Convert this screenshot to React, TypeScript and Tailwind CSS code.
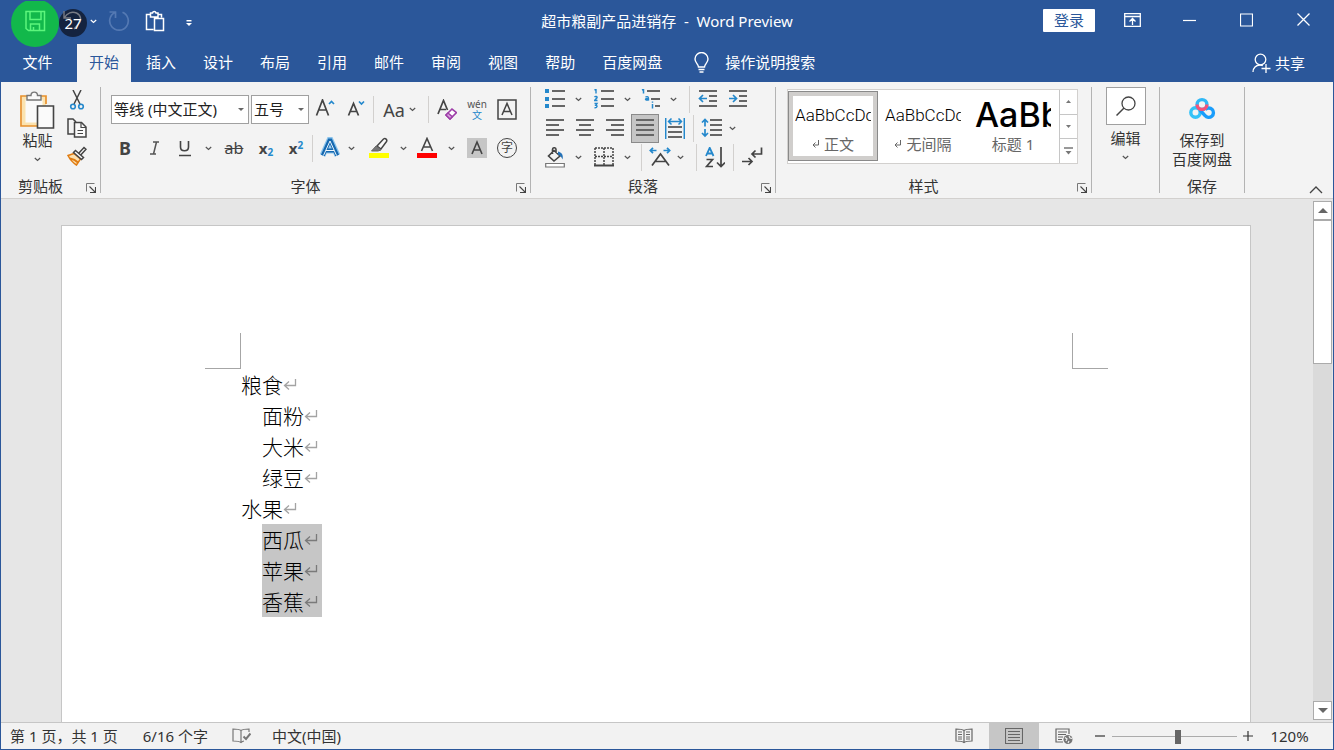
import type { ReactNode } from 'react';

const TABS = ['插入', '设计', '布局', '引用', '邮件', '审阅', '视图', '帮助', '百度网盘'];

const LINES = [
  { text: '粮食', indent: false, selected: false },
  { text: '面粉', indent: true, selected: false },
  { text: '大米', indent: true, selected: false },
  { text: '绿豆', indent: true, selected: false },
  { text: '水果', indent: false, selected: false },
  { text: '西瓜', indent: true, selected: true },
  { text: '苹果', indent: true, selected: true },
  { text: '香蕉', indent: true, selected: true },
];

type IconProps = { w?: number; h?: number; className?: string; children: ReactNode };

function Icon({ w = 20, h = 20, className = '', children }: IconProps) {
  return (
    <svg width={w} height={h} viewBox={`0 0 ${w} ${h}`} fill="none" stroke="#444" strokeWidth="1.5" className={`shrink-0 ${className}`} aria-hidden="true">
      {children}
    </svg>
  );
}

function Tool({ label, className = 'w-7', children }: { label: string; className?: string; children: ReactNode }) {
  return (
    <button type="button" aria-label={label} className={`h-full shrink-0 flex items-center justify-center ${className}`}>
      {children}
    </button>
  );
}

function Chevron({ color = '#555' }: { color?: string }) {
  return (
    <Icon w={7} h={5}>
      <path d="M.8 1l2.700 2.500L6.200 1" stroke={color} strokeWidth="1.200" />
    </Icon>
  );
}

function Drop({ label, className = 'w-3' }: { label: string; className?: string }) {
  return (
    <Tool label={label} className={className}>
      <Chevron />
    </Tool>
  );
}

function Sep({ className = '' }: { className?: string }) {
  return <div className={`w-px shrink-0 self-center h-[27px] bg-[#d2d0ce] ${className}`} />;
}

function Group({ label, launcher, className, children }: { label?: string; launcher?: boolean; className: string; children: ReactNode }) {
  return (
    <section aria-label={label} className={`shrink-0 my-[5px] flex flex-col justify-between border-r border-[#b3b3b3] ${className}`}>
      {children}
      {label && (
        <div className="relative h-[14px] text-center leading-[14px]">
          <span className={launcher ? 'pr-5' : ''}>{label}</span>
          {launcher && (
            <button type="button" aria-label={`${label}设置`} className="absolute right-1 bottom-0">
              <Icon w={10} h={10}>
                <path d="M.5 8.500V.5h8" stroke="#777" strokeWidth="1" />
                <path d="M3.500 3.500l5.500 5.500M9.500 4v5.500H4" strokeWidth="1.100" />
              </Icon>
            </button>
          )}
        </div>
      )}
    </section>
  );
}

function Combo({ label, value, className }: { label: string; value: string; className: string }) {
  return (
    <div className={`relative h-[29px] shrink-0 ${className}`}>
      <select aria-label={label} defaultValue={value} className="appearance-none w-full h-full bg-white border border-[#a0a0a0] pl-0.5 text-[#222]">
        <option>{value}</option>
      </select>
      <svg width="6" height="3" viewBox="0 0 6 3" className="absolute right-[5px] top-[13px] pointer-events-none" aria-hidden="true">
        <path d="M0 0h6L3 3z" fill="#666" />
      </svg>
    </div>
  );
}

function AlignIcon({ rows }: { rows: [number, number][] }) {
  return (
    <Icon h={21}>
      {rows.map(([a, b], i) => (
        <path key={i} d={`M${a} ${2 + i * 5}H${b}`} stroke="#666" strokeWidth="2" />
      ))}
    </Icon>
  );
}

function ReturnMark({ dark }: { dark: boolean }) {
  return (
    <Icon w={14} h={13}>
      <path d="M12.500 1v6.500H1.500M6 3.500L1.500 7.500 6 11.500" stroke={dark ? '#7a7a7a' : '#a3a3a3'} strokeWidth="1.300" />
    </Icon>
  );
}

function TitleBar() {
  return (
    <header className="h-[43px] pb-[3px] grid grid-cols-[1fr_auto_1fr] items-stretch text-white">
      <div className="flex pl-2.5">
        <button type="button" aria-label="保存" className="relative w-12 flex items-center justify-center">
          <span className="absolute -top-0.5 left-0 w-12 h-12 rounded-full bg-[#12b84b]" />
          <Icon w={22} h={22} className="relative">
            <path d="M2 1.500h18.500v19h-16L2 18.500zM6 1.500v8h11v-8M6.500 20.500v-6.500h9v6.500M9.500 20v-3" stroke="#5cf57c" strokeWidth="1.500" />
          </Icon>
        </button>
        <button type="button" aria-label="撤消" className="relative w-7 flex items-center justify-center">
          <span className="absolute top-2 left-0 w-7 h-7 rounded-full bg-[#14233f]" />
          <Icon w={22} h={22} className="relative">
            <path d="M2 1v7h7M2.500 7.500C5 3 10 1 14.500 3s5.500 7.500 2 11L12 19" stroke="#777b85" strokeWidth="1.400" />
          </Icon>
          <span className="absolute inset-x-0 top-3 text-center leading-5">27</span>
        </button>
        <Tool label="撤消列表" className="w-3">
          <Chevron color="#fff" />
        </Tool>
        <Tool label="重复" className="w-10">
          <Icon w={22} h={22}>
            <path d="M1.500 2h6v6M7 2.500A9.300 9.300 0 1 0 14.500 2.300" stroke="#5479b3" strokeWidth="1.700" />
          </Icon>
        </Tool>
        <Tool label="粘贴" className="w-8">
          <Icon w={20} h={22}>
            <path d="M8.500 19.500h-7v-15h4M13 4.500h3.500v3M5.500 3h2a1.800 1.800 0 0 1 3.500 0h2v4h-7.500zM9.500 8.500h9v12h-9z" stroke="#fff" strokeWidth="1.500" />
          </Icon>
        </Tool>
        <Tool label="自定义快速访问工具栏" className="w-9">
          <Icon w={6} h={7} className="mt-1">
            <path d="M.5 .7h5" stroke="#fff" />
            <path d="M0 3h6L3 6z" fill="#fff" stroke="none" />
          </Icon>
        </Tool>
      </div>
      <h1 className="self-center whitespace-pre">超市粮副产品进销存  -  Word Preview</h1>
      <div className="flex items-center justify-end pr-px pb-0.5">
        <button type="button" className="mr-[9px] h-[23px] w-[52px] bg-white rounded-[1px] leading-[23px] text-[#2b579a]">登录</button>
        <Tool label="功能区显示选项" className="w-[57px]">
          <Icon w={17} h={14}>
            <path d="M.7.7h15.600v12.600H.7zM.7 3.500h15.600M8.500 12V6M5.500 8.500l3-3 3 3" stroke="#fff" strokeWidth="1.300" />
          </Icon>
        </Tool>
        <Tool label="最小化" className="w-[57px]">
          <Icon w={13} h={14}><path d="M0 7.500h13" stroke="#fff" strokeWidth="1.200" /></Icon>
        </Tool>
        <Tool label="最大化" className="w-[57px]">
          <Icon w={13} h={14}><path d="M.5 1h12v12H.5z" stroke="#fff" strokeWidth="1.200" /></Icon>
        </Tool>
        <Tool label="关闭" className="w-[57px]">
          <Icon w={13} h={14}><path d="M.5.5l12 12M12.500.5l-12 12" stroke="#fff" strokeWidth="1.300" /></Icon>
        </Tool>
      </div>
    </header>
  );
}

function TabBar() {
  return (
    <nav className="h-[38px] flex items-stretch gap-[3px] text-white">
      <button type="button" className="w-[73px] pb-0.5">文件</button>
      <button type="button" className="px-3 pb-0.5 bg-[#f3f3f3] text-[#2b579a]">开始</button>
      {TABS.map((tab) => (
        <button key={tab} type="button" className="px-3 pb-0.5">{tab}</button>
      ))}
      <button type="button" className="ml-4 pb-0.5 flex items-center gap-[15px]">
        <Icon w={17} h={21}>
          <path d="M5.500 15c0-3-3.500-4-3.500-8a6.500 6.500 0 0 1 13 0c0 4-3.500 5-3.500 8zM5.500 17.500h6M6.500 20h4" stroke="#fff" strokeWidth="1.400" />
        </Icon>
        操作说明搜索
      </button>
      <button type="button" className="ml-auto mr-7 flex items-center gap-1">
        <Icon w={19} h={20}>
          <circle cx="8.500" cy="6.500" r="5.300" stroke="#fff" strokeWidth="1.300" />
          <path d="M1 19c0-4 3-7 7-7 1 0 2 .2 2.800.6M14 11v9M9.500 15.500h9" stroke="#fff" strokeWidth="1.300" />
        </Icon>
        共享
      </button>
    </nav>
  );
}

function ClipboardGroup() {
  return (
    <Group label="剪贴板" launcher className="w-[100px]">
      <div className="flex gap-1.5 pl-[15px]">
        <button type="button" className="w-[43px] flex flex-col items-center pt-1">
          <Icon w={35} h={38}>
            <path d="M2 5h24v30H2z" fill="#fbe3b0" stroke="none" />
            <path d="M5.500 8.500h17v23h-17z" fill="#fafafa" stroke="none" />
            <path d="M7 5H1v30h16M21 5h5v8" stroke="#e8912d" strokeWidth="1.700" />
            <path d="M7 9V4.500h4c0-4.500 6.500-4.500 6.500 0H21V9z" fill="#fafafa" stroke="#777" strokeWidth="1.400" />
            <path d="M17.500 15h16v22h-16z" fill="#fafafa" strokeWidth="1.600" />
          </Icon>
          <span className="h-[22px] leading-[22px]">粘贴</span>
          <span className="h-4 flex items-center"><Chevron /></span>
        </button>
        <div className="flex flex-col">
          <div className="h-[26px]"><Tool label="剪切" className="w-6">
            <Icon w={16} h={20}>
              <path d="M4 0l7 14M12 0L5 14" />
              <circle cx="4" cy="16.500" r="2.300" stroke="#2488cc" strokeWidth="1.600" />
              <circle cx="12" cy="16.500" r="2.300" stroke="#2488cc" strokeWidth="1.600" />
            </Icon>
          </Tool></div>
          <div className="h-[29px]"><Tool label="复制" className="w-6">
            <Icon w={20} h={20}>
              <path d="M7 16H1V1h5l3 3" />
              <path d="M7.500 4.500h7l4.500 4.500v10H7.500z" fill="#fafafa" />
              <path d="M14 5v4.500h5M10.500 12.500h5.500M10.500 15.500h5.500" strokeWidth="1.200" />
            </Icon>
          </Tool></div>
          <div className="h-[28px]"><Tool label="格式刷" className="w-6">
            <Icon w={20} h={20}>
              <path d="M7 7.500L1 9.500c2 4 4.500 7 8.500 9.500l4-6z" fill="#fbe0b0" stroke="#e07b10" />
              <path d="M3 12.500c3 .5 6 2 8 4" stroke="#e07b10" strokeWidth="2" />
              <path d="M11.500 7.500l5.500-6 2 1.800-5.500 6" fill="#fafafa" />
              <path d="M8.500 4.500l8 7-2 2-8-7z" fill="#fafafa" />
            </Icon>
          </Tool></div>
        </div>
      </div>
    </Group>
  );
}

function FontGroup() {
  return (
    <Group label="字体" launcher className="w-[430px]">
      <div className="pt-2 flex flex-col gap-2.5">
        <div className="flex h-[29px] pl-2.5">
          <Combo label="字体" value="等线 (中文正文)" className="w-[138px]" />
          <Combo label="字号" value="五号" className="ml-0.5 w-[58px]" />
          <Tool label="增大字号" className="w-8">
            <Icon h={21}><path d="M1.500 16.500L7.500 1l6 15.500M3.500 11h8" strokeWidth="1.700" /><path d="M14 5l2.500-2.500L19 5" stroke="#2488cc" strokeWidth="1.700" /></Icon>
          </Tool>
          <Tool label="减小字号" className="w-8">
            <Icon h={21}><path d="M1.500 16.500L6.500 4.500l5 12M3 12.500h7" strokeWidth="1.700" /><path d="M12 2.500L14.500 5 17 2.500" stroke="#2488cc" strokeWidth="1.700" /></Icon>
          </Tool>
          <Sep />
          <Tool label="更改大小写" className="ml-2 w-6 text-lg text-[#444]">Aa</Tool>
          <Drop label="更改大小写选项" />
          <Sep className="ml-2.5" />
          <Tool label="清除格式" className="ml-[3px] w-[30px]">
            <Icon w={20} h={21}>
              <path d="M1 15L6.500 1.500 10.500 11M3 10.500h6" strokeWidth="1.700" />
              <path d="M9 16l6-6 4.500 3.500-6.500 6.500z" fill="#fff" stroke="#9e3fa8" strokeWidth="1.600" />
              <path d="M9 16l2-2 4.300 3.700-2.300 2.300z" fill="#d9a5df" stroke="#9e3fa8" />
            </Icon>
          </Tool>
          <Tool label="拼音指南" className="w-[30px] flex-col text-[#555]">
            <span className="text-[10px] leading-[11px]">wén</span>
            <span className="text-[10px] leading-[11px] text-[#2488cc]">文</span>
          </Tool>
          <Tool label="字符边框" className="w-[30px]">
            <Icon w={20} h={21}><path d="M1 1h18v19H1zM5 16L10 4.500 15 16M7 12.500h6" /></Icon>
          </Tool>
        </div>
        <div className="flex h-7 pl-[9px] text-[#444]">
          <Tool label="加粗" className="w-[30px] text-lg leading-6 font-bold">B</Tool>
          <Tool label="倾斜" className="w-[30px]">
            <Icon w={12} h={14}><path d="M4 1h6M1 13h6M7.500 1l-3 12" stroke="#555" /></Icon>
          </Tool>
          <Tool label="下划线" className="w-[30px]">
            <Icon w={14} h={18}><path d="M2.500 2v6c0 5 8 5 8 0V2" strokeWidth="1.600" /><path d="M1 16.500h12" /></Icon>
          </Tool>
          <Drop label="下划线选项" className="w-4" />
          <Tool label="删除线" className="w-9 text-base line-through decoration-1">ab</Tool>
          <Tool label="下标" className="w-7 font-bold"><span>x<sub className="text-[10px] text-[#2488cc]">2</sub></span></Tool>
          <Tool label="上标" className="ml-0.5 w-7 font-bold"><span>x<sup className="text-[10px] text-[#2488cc]">2</sup></span></Tool>
          <Sep className="ml-0.5" />
          <Tool label="文本效果" className="ml-0.5 w-[30px]">
            <Icon w={20} h={22}>
              <path d="M2.500 18.500L9.500 3h1l7 15.500M5.500 13.500h9" stroke="#8cc4ec" strokeWidth="6" />
              <path d="M2.800 18.500L9.500 3.500h1l6.700 15M5.500 13.500h9" stroke="#1568b0" strokeWidth="4" />
              <path d="M3.500 18.500L10 4l6.500 14.500M6 13.500h8" stroke="#eef6fc" strokeWidth="1" />
            </Icon>
          </Tool>
          <Drop label="文本效果选项" />
          <Tool label="突出显示" className="ml-1 w-9">
            <Icon w={20} h={22}>
              <path d="M0 16h20v5H0z" fill="#ff0" stroke="none" />
              <path d="M8 9L14.500 2c2-1.500 4 1 3 2.500L12 12z" fill="#fafafa" />
              <path d="M7 9l5 4-3 1H2.500z" fill="#777" stroke="#666" strokeWidth="1" />
            </Icon>
          </Tool>
          <Drop label="突出显示颜色" />
          <Tool label="字体颜色" className="w-9">
            <Icon w={20} h={22}>
              <path d="M0 16h20v5H0z" fill="#f00" stroke="none" />
              <path d="M4.500 14L10 1.500 15.500 14M6.500 10h7" strokeWidth="1.600" />
            </Icon>
          </Tool>
          <Drop label="字体颜色选项" />
          <Tool label="字符底纹" className="ml-[5px] w-[30px]">
            <Icon w={20}><path d="M0 0h20v20H0z" fill="#c6c6c6" stroke="none" /><path d="M5 16l5-12 5 12M7 12h6" strokeWidth="1.600" /></Icon>
          </Tool>
          <Tool label="带圈字符" className="w-[30px]">
            <span className="w-5 h-5 rounded-full border border-[#444] text-xs leading-[17px] text-center">字</span>
          </Tool>
        </div>
      </div>
    </Group>
  );
}

function ParagraphGroup() {
  return (
    <Group label="段落" launcher className="w-[245px]">
      <div className="flex flex-col gap-0.5 pl-2.5">
        <div className="flex h-[25px]">
          <Tool label="项目符号">
            <Icon h={21}>
              <path d="M7 2h13M7 10h13M7 17h13" stroke="#666" strokeWidth="2" />
              <path d="M0 0h4v4H0zM0 8h4v4H0zM0 15h4v4H0z" fill="#2488cc" stroke="none" />
            </Icon>
          </Tool>
          <Drop label="项目符号选项" className="w-[18px]" />
          <Tool label="编号" className="w-[34px]">
            <Icon h={21}>
              <path d="M7 2h13M7 10h13M7 17h13" stroke="#666" strokeWidth="2" />
              <path d="M.5 1L2 .3V4.500M.5 8c1-1 3-.5 2.500.8L.5 11.500h3M.5 14.500h2.500l-1.200 1.800c1.800 0 1.800 2.700-1.300 2.400" stroke="#2488cc" strokeWidth="1.400" />
            </Icon>
          </Tool>
          <Drop label="编号选项" />
          <Tool label="多级列表" className="w-9">
            <Icon h={21}>
              <path d="M6 2h13M10 10h9M14 17h5" stroke="#666" strokeWidth="2" />
              <path d="M1 1L2.500.3V4.500M4.500 8c3-1 3 0 3 3.500M7.500 9.500c-4-.3-4 2 0 1.500M11.500 15v4.500M11.500 12.500v1.200" stroke="#2488cc" strokeWidth="1.500" />
            </Icon>
          </Tool>
          <Drop label="多级列表选项" className="w-2" />
          <Sep className="ml-3" />
          <Tool label="减少缩进量" className="ml-1 w-7">
            <Icon h={21}>
              <path d="M1 2h18M11 7h8M11 12h8M1 17h18" stroke="#666" strokeWidth="2" />
              <path d="M9 9.500H1.500M5 6L1.500 9.500 5 13" stroke="#2488cc" strokeWidth="1.700" />
            </Icon>
          </Tool>
          <Tool label="增加缩进量" className="ml-0.5 w-7">
            <Icon h={21}>
              <path d="M1 2h18M11 7h8M11 12h8M1 17h18" stroke="#666" strokeWidth="2" />
              <path d="M1 9.500h7.500M5 6l3.500 3.500L5 13" stroke="#2488cc" strokeWidth="1.700" />
            </Icon>
          </Tool>
        </div>
        <div className="flex h-[29px] gap-0.5">
          <Tool label="左对齐"><AlignIcon rows={[[1, 19], [1, 14], [1, 19], [1, 14]]} /></Tool>
          <Tool label="居中"><AlignIcon rows={[[1, 19], [4, 16], [1, 19], [4, 16]]} /></Tool>
          <Tool label="右对齐"><AlignIcon rows={[[1, 19], [6, 19], [1, 19], [6, 19]]} /></Tool>
          <Tool label="两端对齐" className="w-7 bg-[#c5c5c5] border border-[#8a8a8a]"><AlignIcon rows={[[1, 19], [1, 19], [1, 19], [1, 19]]} /></Tool>
          <Tool label="分散对齐">
            <Icon h={21}>
              <path d="M3 9h14M3 14h14M3 19h14" stroke="#666" strokeWidth="2" />
              <path d="M.7 0v21M19.300 0v21M3.500 3.500h13M6.500.5l-3 3 3 3M13.500.5l3 3-3 3" stroke="#2488cc" strokeWidth="1.500" />
            </Icon>
          </Tool>
          <Sep className="ml-0.5" />
          <Tool label="行距" className="ml-0.5 w-7">
            <Icon w={22} h={21}>
              <path d="M9 2h12M9 7h12M9 12h12M9 17h12" stroke="#666" strokeWidth="2" />
              <path d="M4 1.500v7M1 4.500l3-3 3 3M4 11v7M1 15l3 3 3-3" stroke="#2488cc" strokeWidth="1.700" />
            </Icon>
          </Tool>
          <Drop label="行距选项" className="w-2" />
        </div>
        <div className="flex h-[25px]">
          <Tool label="底纹">
            <Icon w={20} h={21}>
              <path d="M.7 16.500h18.600v3.500H.7z" fill="#fff" stroke="#777" strokeWidth="1.200" />
              <path d="M9 3.500l6 5.500-6 5-5.500-5zM7.500 7V2.500c0-2.300 3.500-2.300 3.500 0V6" strokeWidth="1.600" />
              <path d="M13 4.500c4.500 1 5.500 4.500 4.500 8-1-2-1.500-4-4.500-5z" fill="#2472b8" stroke="none" />
            </Icon>
          </Tool>
          <Drop label="底纹颜色" className="w-[18px]" />
          <Tool label="边框" className="w-[34px]">
            <Icon h={21}>
              <path d="M1 1h18M1 9.500h18M1 1v17M10 1v17M19 1v17" strokeDasharray="2 1" />
              <path d="M0 18.500h20" strokeWidth="2" />
            </Icon>
          </Tool>
          <Drop label="边框选项" />
          <Sep className="ml-2" />
          <Tool label="中文版式" className="ml-0.5 w-8">
            <Icon w={22} h={21}>
              <path d="M3 18.500L11.500 7l8.500 11.500M6.500 14.500h10" strokeWidth="1.700" />
              <path d="M7.500 3.500H1.500M4 .8L1.300 3.500 4 6.200M14.500 3.500h6M18 .8l2.700 2.700L18 6.200" stroke="#2488cc" strokeWidth="1.700" />
            </Icon>
          </Tool>
          <Drop label="中文版式选项" className="w-2" />
          <Sep className="ml-3" />
          <Tool label="排序" className="w-9">
            <Icon w={20} h={21}>
              <path d="M1 9L4.700.8 8.500 9M2.300 6.500h5" stroke="#2488cc" strokeWidth="1.800" />
              <path d="M1.500 12.500h6l-6 7h6.500M16 0v19M12 15.500l4 4 4-4" strokeWidth="1.700" />
            </Icon>
          </Tool>
          <Sep />
          <Tool label="显示编辑标记" className="w-9">
            <Icon w={22} h={21}>
              <path d="M20.500.5V7H11M14.500 3.500L11 7l3.500 3.500M1 14.500h10M7.500 11L11 14.500 7.500 18" strokeWidth="1.700" />
            </Icon>
          </Tool>
        </div>
      </div>
    </Group>
  );
}

type StyleCardProps = { name: string; mark?: boolean; active?: boolean; preview?: string; previewClass?: string };

function StyleCard({ name, mark, active, preview = 'AaBbCcDc', previewClass = "font-['Roboto'] text-[17px] font-light" }: StyleCardProps) {
  return (
    <button type="button" className={`w-[90px] h-[70px] flex flex-col border ${active ? 'border-[#8a8a8a] bg-[#d0cecc]' : 'border-transparent'} p-1`}>
      <span className="w-full flex-1 bg-white px-0.5 flex flex-col">
        <span className={`block h-[38px] w-full overflow-hidden whitespace-nowrap text-left leading-[38px] text-black ${previewClass}`}>{preview}</span>
        <span className="flex h-5 items-center justify-center gap-1 text-[#666]">
          {mark && (
            <Icon w={8} h={8}><path d="M6.500 0v5H1M3.500 2.500L1 5l2.500 2.500" stroke="#666" strokeWidth="1" /></Icon>
          )}
          {name}
        </span>
      </span>
    </button>
  );
}

function StylesGroup() {
  return (
    <Group label="样式" launcher className="w-[316px]">
      <div className="mt-0.5 ml-[11px] w-[291px] h-[75px] flex border border-[#d2d0ce] bg-white">
        <div className="flex flex-1 pt-px">
          <StyleCard name="正文" mark active />
          <StyleCard name="无间隔" mark />
          <StyleCard name="标题 1" preview="AaBb" previewClass="font-['Inter'] text-[34px] font-medium" />
        </div>
        <div className="w-[18px] flex flex-col border-l border-[#c6c6c6] divide-y divide-[#c6c6c6]">
          <Tool label="上一行" className="flex-1"><Icon w={5} h={3}><path d="M0 3h5L2.500 0z" fill="#777" stroke="none" /></Icon></Tool>
          <Tool label="下一行" className="flex-1"><Icon w={5} h={3}><path d="M0 0h5L2.500 3z" fill="#777" stroke="none" /></Icon></Tool>
          <Tool label="其他样式" className="flex-1"><Icon w={9} h={8}><path d="M0 1h9" stroke="#777" /><path d="M1.500 4h6l-3 3.500z" fill="#777" stroke="none" /></Icon></Tool>
        </div>
      </div>
    </Group>
  );
}

function Ribbon() {
  return (
    <div className="h-[117px] shrink-0 flex bg-[#f3f3f3] border-b border-[#d2d0ce]">
      <ClipboardGroup />
      <FontGroup />
      <ParagraphGroup />
      <StylesGroup />
      <Group className="w-[68px]">
        <button type="button" className="flex flex-col items-center">
          <span className="w-10 h-[38px] flex items-center justify-center bg-white border border-[#a0a0a0]">
            <Icon w={20} h={20}><circle cx="12.500" cy="7.500" r="6.500" strokeWidth="1.300" /><path d="M8 12l-7.500 7.500" /></Icon>
          </span>
          <span className="h-[26px] leading-[26px]">编辑</span>
          <span className="h-3 flex items-center"><Chevron /></span>
        </button>
      </Group>
      <Group label="保存" className="w-[85px]">
        <button type="button" className="flex flex-col items-center pt-2.5">
          <Icon w={28} h={24}>
            <circle cx="7.500" cy="15.500" r="4.700" stroke="#33c3f8" strokeWidth="3.400" />
            <path d="M12 13l5 5.500a4.700 4.700 0 1 0 .3-6" stroke="#1a9dfb" strokeWidth="3.400" />
            <circle cx="14" cy="7.500" r="4.900" stroke="#2fb8f6" strokeWidth="3.400" />
            <path d="M9.100 7.500a4.900 4.900 0 0 0 9.800 0" stroke="#f5537a" strokeWidth="3.400" />
          </Icon>
          <span className="mt-2.5 leading-[19px]">保存到<br />百度网盘</span>
        </button>
      </Group>
      <button type="button" aria-label="折叠功能区" className="ml-auto mr-2.5 mb-1 self-end">
        <Icon w={14} h={8}><path d="M1 7l6-6 6 6" strokeWidth="1.300" /></Icon>
      </button>
    </div>
  );
}

function Page() {
  return (
    <article className="flex-1 bg-white border border-b-0 border-[#c6c6c6] pl-[143px] pr-[142px] pt-[107px]">
      <div className="flex justify-between">
        <span className="w-9 h-9 border-r border-b border-[#a6a6a6]" />
        <span className="w-9 h-9 border-l border-b border-[#a6a6a6]" />
      </div>
      <div className="pl-9 text-[21px] leading-[31px] text-black font-['Noto_Sans_CJK_SC',sans-serif] font-light">
        {LINES.map((line) => (
          <p key={line.text} className={line.indent ? 'flex pl-[21px]' : 'flex'}>
            <span className={`flex items-center ${line.selected ? 'bg-[#c6c6c6] pr-1' : ''}`}>
              {line.text}
              <ReturnMark dark={line.selected} />
            </span>
          </p>
        ))}
      </div>
    </article>
  );
}

function ScrollBar() {
  return (
    <div className="w-5 shrink-0 flex flex-col py-0.5 pr-px">
      <button type="button" aria-label="向上滚动" className="h-[19px] flex items-center justify-center bg-white border border-[#ababab]">
        <Icon w={10} h={5}><path d="M0 5h10L5 0z" fill="#666" stroke="none" /></Icon>
      </button>
      <div className="flex-1 bg-[#dadada]">
        <div className="h-[144px] bg-white border border-[#ababab]" />
      </div>
      <button type="button" aria-label="向下滚动" className="h-[19px] flex items-center justify-center bg-white border border-[#ababab]">
        <Icon w={10} h={5}><path d="M0 0h10L5 5z" fill="#666" stroke="none" /></Icon>
      </button>
    </div>
  );
}

function StatusBar() {
  return (
    <footer className="h-[27px] shrink-0 flex items-stretch bg-[#f2f2f2] border-t border-[#c6c6c6] pl-[9px] text-[#333]">
      <button type="button">第 1 页，共 1 页</button>
      <button type="button" className="ml-[25px]">6/16 个字</button>
      <Tool label="校对" className="ml-6 w-[18px]">
        <Icon w={19} h={16}>
          <path d="M9 2.500C7 1 4 1 1 1v12c3 0 6 0 8 1.500 1-.8 2-1.300 3-1.500M9 2.500V15M9 2.500C11 1 14 1 17 1v3" stroke="#777" strokeWidth="1.200" />
          <path d="M11.500 8.500l2.500 2.500 4.500-5.500" stroke="#777" strokeWidth="2" />
        </Icon>
      </Tool>
      <button type="button" className="ml-[22px]">中文(中国)</button>
      <div className="ml-auto flex items-stretch">
        <Tool label="阅读视图" className="w-[50px]">
          <Icon w={18} h={16}>
            <path d="M9 2.500C7 1 4 1 1 1v12c3 0 6 0 8 1.500 2-1.500 5-1.500 8-1.500V1c-3 0-6 0-8 1.500zM9 2v12.500M3 4h4M3 6.500h4M3 9h4M3 11h4M11 4h4M11 6.500h4M11 9h4M11 11h4" stroke="#666" strokeWidth="1.200" />
          </Icon>
        </Tool>
        <Tool label="页面视图" className="w-[50px] bg-[#c6c6c6]">
          <Icon w={18} h={16}>
            <path d="M.5.5h17v15H.5zM3 3.500h12M3 6.500h12M3 9.500h12M3 12.500h12" stroke="#666" strokeWidth="1.100" />
          </Icon>
        </Tool>
        <Tool label="Web 版式视图" className="w-[50px]">
          <Icon w={18} h={16}>
            <path d="M8 14H1V1h13v5M3 4h9M3 6.500h8M3 9h5M3 11.500h4" stroke="#666" strokeWidth="1.200" />
            <circle cx="13" cy="11.500" r="4.500" fill="#777" stroke="none" />
            <path d="M10 9.500l2 1.500-1 2M14 8l1 2 2 .5M13 15l1-2" stroke="#f2f2f2" strokeWidth="1.200" />
          </Icon>
        </Tool>
        <Tool label="缩小" className="w-[23px]"><Icon w={11} h={12}><path d="M0 6h10" stroke="#333" strokeWidth="1.200" /></Icon></Tool>
        <input
          type="range"
          aria-label="显示比例"
          min={0}
          max={100}
          defaultValue={53}
          className="w-[125px] self-center appearance-none bg-transparent [&::-webkit-slider-runnable-track]:h-px [&::-webkit-slider-runnable-track]:bg-[#ababab] [&::-webkit-slider-thumb]:appearance-none [&::-webkit-slider-thumb]:w-1.5 [&::-webkit-slider-thumb]:h-3.5 [&::-webkit-slider-thumb]:-mt-1.5 [&::-webkit-slider-thumb]:bg-[#666]"
        />
        <Tool label="放大" className="w-[23px]"><Icon w={11} h={12}><path d="M0 6h10M5 1v10" stroke="#333" strokeWidth="1.200" /></Icon></Tool>
        <button type="button" className="w-[73px] pr-3.5">120%</button>
      </div>
    </footer>
  );
}

export default function App() {
  return (
    <div className="h-screen flex flex-col overflow-hidden bg-[#2b579a] border border-[#2b579a] text-[15px] text-[#333] whitespace-nowrap font-['Noto_Sans','Noto_Sans_CJK_SC',sans-serif]">
      <TitleBar />
      <TabBar />
      <Ribbon />
      <div className="flex-1 min-h-0 flex bg-[#e6e6e6]">
        <main className="flex-1 min-w-0 flex pl-[60px] pr-[62px] pt-[26px]">
          <Page />
        </main>
        <ScrollBar />
      </div>
      <StatusBar />
    </div>
  );
}
